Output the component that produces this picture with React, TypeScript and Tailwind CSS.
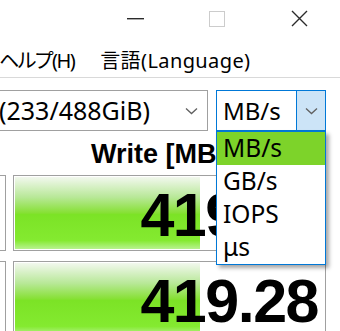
import React from "react";

const units = ["MB/s", "GB/s", "IOPS", "μs"];

const results = [
  { value: "419.28", ratio: 0.6 },
  { value: "419.28", ratio: 0.6 },
];

function Chevron({ className }: { className?: string }) {
  return (
    <svg width="13" height="8" viewBox="0 0 13 8" className={className}>
      <path d="M1 1.5 L6.5 6.5 L12 1.5" fill="none" stroke="#606060" strokeWidth="1.3" />
    </svg>
  );
}

function Meter({ value, ratio }: { value: string; ratio: number }) {
  return (
    <div className="flex h-[76px] gap-[7px]">
      <div className="w-[6px] border-y border-r border-[#a0a0a0] bg-white" />
      <div className="relative w-[313px] border border-[#a0a0a0] bg-white p-px">
        <div className="relative h-full w-full">
          <div
            className="absolute inset-y-0 left-0 bg-[linear-gradient(to_bottom,#f2f8ee_0%,#b8e898_28%,#86e034_50%,#7ce326_52%,#84ea30_88%,#b8f290_100%)]"
            style={{ width: `${ratio * 100}%` }}
          />
          <div className="relative flex h-full items-center justify-end pr-[6px] pt-[5px] font-['Liberation_Sans',Arial,sans-serif] text-[61px] font-bold leading-none tracking-[-1.5px] text-black">
            {value}
          </div>
        </div>
      </div>
    </div>
  );
}

export default function App() {
  return (
    <div className="relative h-[331px] w-[340px] overflow-hidden bg-white font-['Noto_Sans','Noto_Sans_CJK_JP',sans-serif] text-black">
      {/* caption buttons */}
      <div className="flex h-[37px] justify-end">
        <div className="flex w-[82px] items-center justify-center">
          <svg width="17" height="2" viewBox="0 0 17 2">
            <rect x="0" y="0" width="17" height="1.4" fill="#2b2b2b" />
          </svg>
        </div>
        <div className="flex w-[82px] items-center justify-center">
          <div className="h-[16px] w-[16px] border border-[#cccccc]" />
        </div>
        <div className="flex w-[82px] items-center justify-center">
          <svg width="17" height="17" viewBox="0 0 17 17">
            <path d="M1 1 L16 16 M16 1 L1 16" stroke="#2b2b2b" strokeWidth="1.4" />
          </svg>
        </div>
      </div>

      {/* menu */}
      <div className="flex h-[40px] items-center gap-[26px] pt-[8px] font-['Noto_Sans','Noto_Sans_CJK_JP',sans-serif] text-[20px] leading-none [font-feature-settings:'palt']">
        <span className="-ml-[1px] tracking-[-1.5px]">ヘルプ(H)</span>
        <span className="tracking-[0.4px]">言語(Language)</span>
      </div>
      <div className="h-px bg-[#d9d9d9]" />

      {/* selectors */}
      <div className="mt-[12px] flex gap-[8px]">
        <div className="-ml-[10px] flex h-[41px] w-[218px] items-center border border-[#a0a0a0] pr-[9px] text-[25px]">
          <span className="flex-1 pl-[8px] leading-none">(233/488GiB)</span>
          <Chevron />
        </div>
        <div className="flex h-[41px] w-[110px] border border-[#0078d7] text-[24px]">
          <span className="flex flex-1 items-center pl-[6px] leading-none">MB/s</span>
          <div className="flex w-[29px] items-center justify-center border-l border-[#0078d7] bg-[#cce4f7]">
            <Chevron />
          </div>
        </div>
      </div>

      {/* header */}
      <div className="flex h-[44px]">
        <div className="w-[13px]" />
        <div className="flex w-[313px] items-center justify-center pt-[2px] font-['Liberation_Sans',Arial,sans-serif] text-[27px] font-bold leading-none">
          Write [MB/s]
        </div>
      </div>

      <div className="flex flex-col gap-[10px]">
        {results.map((r, i) => (
          <Meter key={i} value={r.value} ratio={r.ratio} />
        ))}
      </div>

      {/* open unit list */}
      <div className="absolute left-[216px] top-[131px] w-[110px] border border-[#0078d7] bg-white text-[24.5px] shadow-[3px_3px_4px_rgba(0,0,0,0.35)]">
        {units.map((u, i) => (
          <div
            key={u}
            className={`flex h-[33px] items-center pl-[6px] leading-none ${i === 0 ? "bg-[#7dd32a]" : ""}`}
          >
            {u}
          </div>
        ))}
      </div>
    </div>
  );
}
